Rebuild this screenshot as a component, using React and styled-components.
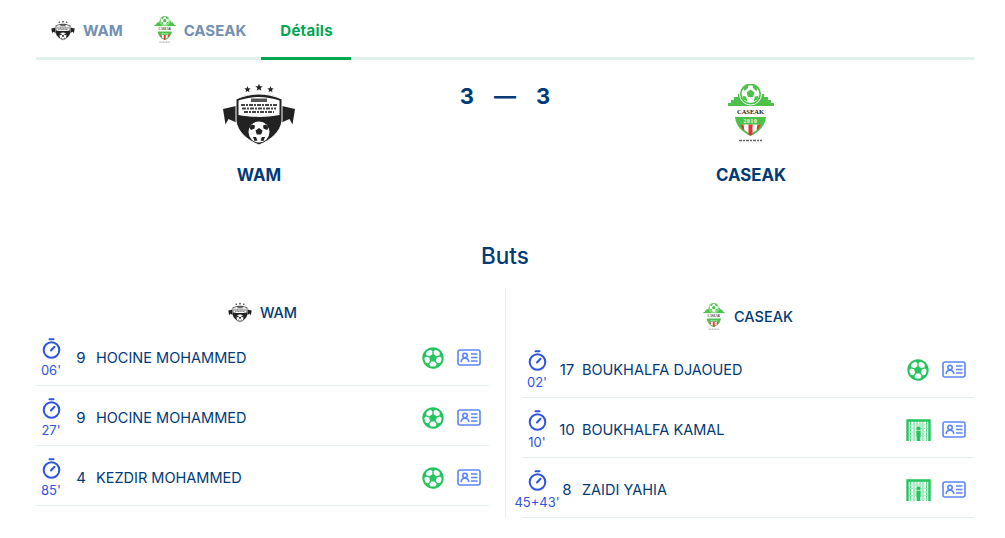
import React from 'react';
import styled, { createGlobalStyle } from 'styled-components';
import { FaRegFutbol } from 'react-icons/fa';

const navy = '#003a78';
const green = '#22c55e';
const blue = '#2f55e0';
const line = '#e2f1e9';

const GlobalStyle = createGlobalStyle`
  body {
    margin: 0;
    background: #fff;
    font-family: "Inter", "Liberation Sans", sans-serif;
  }
`;

const Page = styled.div`
  width: 938px;
  margin-left: 36px;
`;

const TabBar = styled.nav`
  display: flex;
  gap: 1px;
  height: 57px;
  border-bottom: 3px solid ${line};
`;

const Tab = styled.a`
  display: flex;
  align-items: center;
  gap: 8px;
  height: 60px;
  box-sizing: border-box;
  padding: 3px 15px 0;
  border-bottom: 3px solid transparent;
  color: #7290b2;
  font-size: 15px;
  font-weight: 700;
`;

const ActiveTab = styled(Tab)`
  margin-left: -1px;
  padding: 3px 18px 0 19px;
  border-bottom-color: #00a651;
  color: #00a651;
  letter-spacing: .3px;
`;

const Match = styled.section`
  display: grid;
  grid-template-columns: 446px minmax(0, 1fr) 446px;
  height: 155px;
`;

const Team = styled.div`
  display: flex;
  flex-direction: column;
  align-items: center;
  padding-top: 24px;
`;

const TeamLogo = styled.div`
  height: 61px;
`;

const TeamName = styled.div`
  margin-top: 20px;
  color: ${navy};
  font-size: 16.8px;
  font-weight: 700;
`;

const Score = styled.div`
  display: flex;
  justify-content: center;
  gap: 20px;
  padding-top: 22px;
  color: ${navy};
  font-size: 22px;
  font-weight: 700;
  line-height: 28px;
`;

const SectionTitle = styled.h2`
  margin: 0;
  height: 73px;
  padding-top: 25px;
  box-sizing: border-box;
  color: ${navy};
  font-size: 22.5px;
  font-weight: 500;
  line-height: 32px;
  text-align: center;
`;

const Columns = styled.div`
  display: grid;
  grid-template-columns: 453px 1fr;
  column-gap: 16px;
`;

const Column = styled.div`
  ${props => props.$right && `
    border-left: 1px solid ${line};
    padding-left: 16px;
  `}
`;

const ColumnHeader = styled.div`
  display: flex;
  justify-content: center;
  align-items: center;
  gap: ${props => (props.$right ? '9px' : '8px')};
  height: ${props => (props.$right ? '50px' : '38px')};
  padding-top: ${props => (props.$right ? '7px' : '10px')};
  box-sizing: border-box;
  color: ${navy};
  font-size: 14.5px;
  font-weight: 500;
`;

const Row = styled.div`
  display: flex;
  align-items: center;
  height: 60px;
  box-sizing: border-box;
  padding: 4px 8px 0 0;
  border-bottom: 1px solid ${line};
`;

const Time = styled.div`
  display: flex;
  flex-direction: column;
  align-items: center;
  gap: 2px;
  width: 30px;
  flex-shrink: 0;
  color: ${blue};
  font-size: 13px;
  line-height: 16px;
  white-space: nowrap;
`;

const PlayerNumber = styled.span`
  width: 24px;
  margin: 0 3px;
  flex-shrink: 0;
  text-align: center;
  color: ${navy};
  font-size: 15px;
  font-weight: 400;
`;

const Name = styled.span`
  flex: 1;
  color: ${navy};
  font-size: 14.5px;
  font-weight: 400;
`;

const EventIcon = styled.span`
  display: flex;
  justify-content: center;
  width: 26px;
  margin-right: 11px;
  color: ${green};
`;

const TimerIcon = () => (
  <svg width="19" height="22" viewBox="0 0 19 22" fill="none" stroke={blue} strokeWidth="2" strokeLinecap="round">
    <path d="M7.5 1.2h4" />
    <circle cx="9.5" cy="12" r="7.8" />
    <path d="M9 12.5l3.5-3.8" />
  </svg>
);

const CardIcon = () => (
  <svg width="24" height="17" viewBox="0 0 24 17" fill="none" stroke="#5b86f5" strokeWidth="1.6">
    <rect x="1" y="1" width="22" height="15" rx="2" />
    <circle cx="8" cy="6.6" r="2.2" />
    <path d="M4.2 13c0-5 7.6-5 7.6 0" />
    <path d="M14 5h6.5M14 8.5h6.5M14 12h6.5" />
  </svg>
);

const GoalIcon = () => (
  <svg width="25" height="22" viewBox="0 0 25 22" fill="none">
    <path d="M4.5 2v20M8 2v20M11 2v20M14 2v20M17 2v20M20.5 2v20" stroke="#55d488" strokeWidth="1" />
    <path d="M2 6h21M2 9.5h21M2 13h21M2 16.5h21M2 20h21" stroke="#a5ebc0" strokeWidth="1.1" />
    <path d="M1.5 22V1.5h22V22" stroke={green} strokeWidth="2.4" />
    <circle cx="12.5" cy="9.5" r="2" fill={green} />
    <path d="M10.5 12h4v6h-.5v4h-3v-4h-.5z" fill={green} />
  </svg>
);

// five pointed star around (x, y)
const Star = ({ x, y, r }) => {
  const points = [];
  for (let i = 0; i < 10; i++) {
    const radius = i % 2 === 0 ? r : r * 0.42;
    const angle = -Math.PI / 2 + (i * Math.PI) / 5;
    points.push(`${x + radius * Math.cos(angle)},${y + radius * Math.sin(angle)}`);
  }
  return <polygon points={points.join(' ')} fill="#222" />;
};

const WamLogo = ({ width, height }) => (
  <svg width={width} height={height} viewBox="17 9 74 62">
    <Star x={42.5} y={14.5} r={3.4} />
    <Star x={54} y={12.5} r={4} />
    <Star x={65.5} y={14.5} r={3.4} />
    <path d="M18 34l13-3 1.5 17-9-4-3 5.500z" fill="#222" />
    <path d="M90 34l-13-3-1.500 17 9-4 3 5.500z" fill="#222" />
    <path d="M54 19c8 0 15 1.800 23 5v22C75.500 57 66 65 54 70 42 65 32.500 57 31 46V24c8-3.200 15-5 23-5z" fill="#222" stroke="#fff" strokeWidth="1" />
    <path d="M33.500 25.500c7-2 13.500-3.500 20.500-3.500s13.500 1.500 20.500 3.500V40c-13 2.500-28 2.500-41 0z" fill="#fff" />
    <path d="M46 23.500h16v3.500H46z" fill="#555" />
    <path d="M36 30h36M37 33.500h34M39 37h30" stroke="#444" strokeWidth="2" strokeDasharray="4 1 2 1" />
    <circle cx="54" cy="57" r="10.500" fill="#fff" />
    <path d="M54 53l3.500 2.500-1.300 4h-4.400l-1.300-4zM47 49.500l3 1-.5 3-3.500 1.500-1.800-2.500zM61 49.500l-3 1 .5 3 3.500 1.500 1.800-2.500zM48 62h3l1.500 3.500-3 .5zM60 62h-3l-1.500 3.500 3 .5z" fill="#222" />
  </svg>
);

const CaseakLogo = ({ width, height }) => (
  <svg width={width} height={height} viewBox="26 10 48 60">
    <path d="M27 32v-3h3v-3h3v-3h4v-3h5v-3h16v3h5v3h4v3h3v3h3v3z" fill="#4cc24a" />
    <circle cx="49.5" cy="20" r="11" fill="#4cc24a" stroke="#fff" strokeWidth="1" />
    <circle cx="49.5" cy="20" r="8.800" fill="#fff" />
    <path d="M49.5 15.500l4 2.900-1.500 4.700h-5l-1.500-4.700zM42 13.500l5-2.800v3.300l-3.500 3zM57 13.500l-5-2.800v3.300l3.500 3zM41.500 22l3.500.5 1.500 5-4-2zM57.500 22l-3.500.5-1.500 5 4-2z" fill="#4cc24a" />
    <rect x="27" y="32" width="45" height="11" fill="#fff" />
    <text x="49.5" y="40" textAnchor="middle" fontFamily="Liberation Serif, serif" fontSize="6.5" fontWeight="700" fill="#222">CASEAK</text>
    <path d="M34 43h31c-1 9-7 15-15.500 19C41 58 35 52 34 43z" fill="#4cc24a" />
    <text x="49.5" y="49" textAnchor="middle" fontFamily="Liberation Serif, serif" fontSize="5.5" fontWeight="700" letterSpacing=".8" fill="#fff">2010</text>
    <path d="M40 50.500h19l-3 5.500-6.500 4-6.500-4z" fill="#fff" />
    <path d="M39.500 50.500h3l1 6-2-1.500zM47.500 50.500h4v10l-2 1-2-1zM56.500 50.500h3l-2 4.500-2 1.500z" fill="#e5312f" />
    <path d="M38 66.500h23" stroke="#666" strokeWidth="1.4" strokeDasharray="3 1 2 1" />
  </svg>
);

const TeamBadge = ({ team, size }) => {
  const Logo = team === 'WAM' ? WamLogo : CaseakLogo;
  const sizes = {
    WAM: { lg: [74, 62], md: [24, 21] },
    CASEAK: { lg: [48, 60], md: [22, 28] },
  };
  const [width, height] = sizes[team][size];
  return <Logo width={width} height={height} />;
};

const left = [
  { time: "06'", number: 9, name: 'HOCINE MOHAMMED', type: 'ball' },
  { time: "27'", number: 9, name: 'HOCINE MOHAMMED', type: 'ball' },
  { time: "85'", number: 4, name: 'KEZDIR MOHAMMED', type: 'ball' },
];

const right = [
  { time: "02'", number: 17, name: 'BOUKHALFA DJAOUED', type: 'ball' },
  { time: "10'", number: 10, name: 'BOUKHALFA KAMAL', type: 'goal' },
  { time: "45+43'", number: 8, name: 'ZAIDI YAHIA', type: 'goal' },
];

const GoalRow = ({ goal }) => (
  <Row>
    <Time>
      <TimerIcon />
      {goal.time}
    </Time>
    <PlayerNumber>{goal.number}</PlayerNumber>
    <Name>{goal.name}</Name>
    <EventIcon>
      {goal.type === 'ball' ? <FaRegFutbol size={22} /> : <GoalIcon />}
    </EventIcon>
    <CardIcon />
  </Row>
);

const App = () => (
  <Page>
    <GlobalStyle />
    <TabBar>
      <Tab><TeamBadge team="WAM" size="md" />WAM</Tab>
      <Tab><TeamBadge team="CASEAK" size="md" />CASEAK</Tab>
      <ActiveTab>Détails</ActiveTab>
    </TabBar>
    <Match>
      <Team>
        <TeamLogo><TeamBadge team="WAM" size="lg" /></TeamLogo>
        <TeamName>WAM</TeamName>
      </Team>
      <Score>
        <span>3</span>
        <span>—</span>
        <span>3</span>
      </Score>
      <Team>
        <TeamLogo><TeamBadge team="CASEAK" size="lg" /></TeamLogo>
        <TeamName>CASEAK</TeamName>
      </Team>
    </Match>
    <SectionTitle>Buts</SectionTitle>
    <Columns>
      <Column>
        <ColumnHeader>
          <TeamBadge team="WAM" size="md" />
          WAM
        </ColumnHeader>
        {left.map((goal, i) => <GoalRow key={i} goal={goal} />)}
      </Column>
      <Column $right>
        <ColumnHeader $right>
          <TeamBadge team="CASEAK" size="md" />
          CASEAK
        </ColumnHeader>
        {right.map((goal, i) => <GoalRow key={i} goal={goal} />)}
      </Column>
    </Columns>
  </Page>
);

export default App;
